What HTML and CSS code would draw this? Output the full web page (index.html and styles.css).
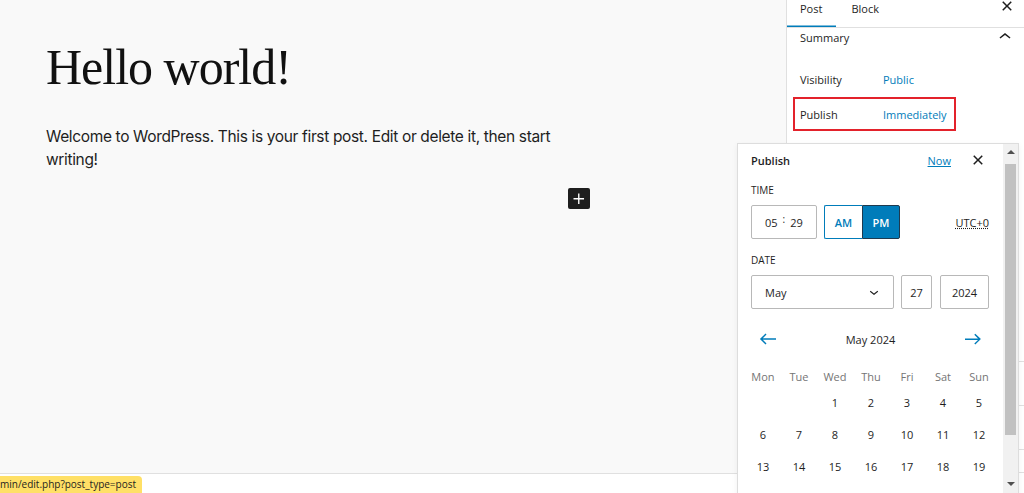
FILE: index.html
```html
<!DOCTYPE html>
<html lang="en">
  <head>
    <meta charset="UTF-8" />
    <meta name="viewport" content="width=device-width, initial-scale=1.0" />
    <title>Edit Post</title>
    <link rel="stylesheet" href="styles.css">
  </head>
  <body>
    <div class="layout">
      <main class="editor">
        <div class="canvas">
          <div class="content">
            <h1 class="post-title">Hello world!</h1>
            <p class="post-text">Welcome to WordPress. This is your first post. Edit or delete it, then start writing!</p>
            <div class="appender-row">
              <button class="appender" aria-label="Add block">
                <svg viewBox="0 0 24 24" width="24" height="24"><path d="M11 12.5V17.5H12.5V12.5H17.5V11H12.5V6H11V11H6V12.5H11Z" fill="#fff"/></svg>
              </button>
            </div>
          </div>
        </div>
        <div class="footer"></div>
      </main>

      <aside class="sidebar">
        <div class="tabs">
          <button class="tab active">Post</button>
          <button class="tab">Block</button>
          <button class="icon-btn tab-close" aria-label="Close settings">
            <svg viewBox="0 0 24 24" width="24" height="24"><path d="M12 13.06l3.712 3.713 1.061-1.06L13.061 12l3.712-3.712-1.06-1.06L12 10.938 8.288 7.227l-1.061 1.06L10.939 12l-3.712 3.712 1.06 1.061L12 13.061z"/></svg>
          </button>
        </div>

        <section class="panel summary">
          <div class="panel-head">
            <span>Summary</span>
            <svg viewBox="0 0 24 24" width="24" height="24"><path d="M6.5 12.4L12 8l5.5 4.4-.9 1.2L12 10l-4.6 3.6-.9-1.2z"/></svg>
          </div>
          <div class="row first">
            <span class="row-label">Visibility</span>
            <a class="row-value" href="#">Public</a>
          </div>
          <div class="row highlight">
            <span class="row-label">Publish</span>
            <a class="row-value" href="#">Immediately</a>
          </div>
        </section>
        <section class="panel small"></section>
        <section class="panel small"></section>
        <section class="panel tiny"></section>
      </aside>
    </div>

    <div class="popover">
      <div class="popover-body">
        <div class="popover-head">
          <span class="popover-title">Publish</span>
          <a class="now" href="#">Now</a>
          <button class="icon-btn" aria-label="Close">
            <svg viewBox="0 0 24 24" width="24" height="24"><path d="M12 13.06l3.712 3.713 1.061-1.06L13.061 12l3.712-3.712-1.06-1.06L12 10.938 8.288 7.227l-1.061 1.06L10.939 12l-3.712 3.712 1.06 1.061L12 13.061z"/></svg>
          </button>
        </div>

        <div class="field-label">Time</div>
        <div class="time-row">
          <div class="box time-box">
            <span>05</span>
            <span class="colon">:</span>
            <span>29</span>
          </div>
          <div class="ampm">
            <button class="am">AM</button>
            <button class="pm">PM</button>
          </div>
          <span class="utc">UTC+0</span>
        </div>

        <div class="field-label date-label">Date</div>
        <div class="date-row">
          <div class="box month">
            <span>May</span>
            <svg viewBox="0 0 24 24" width="18" height="18"><path d="M17.5 11.6L12 16l-5.5-4.4.9-1.2L12 14l4.6-3.6 1 1.2z"/></svg>
          </div>
          <div class="box day">27</div>
          <div class="box year">2024</div>
        </div>

        <div class="cal-head">
          <button class="icon-btn arrow" aria-label="Previous month">
            <svg viewBox="0 0 24 24" width="24" height="24"><path d="M20 11.2H6.8l3.7-3.7-1-1L3.9 12l5.6 5.5 1-1-3.7-3.7H20z"/></svg>
          </button>
          <span class="cal-title">May 2024</span>
          <button class="icon-btn arrow" aria-label="Next month">
            <svg viewBox="0 0 24 24" width="24" height="24"><path d="m14.3 6.7-1 1 3.7 3.7H4v1.5h13l-3.7 3.7 1 1 5.6-5.5z"/></svg>
          </button>
        </div>

        <div class="cal-grid weekdays">
          <span>Mon</span><span>Tue</span><span>Wed</span><span>Thu</span><span>Fri</span><span>Sat</span><span>Sun</span>
        </div>
        <div class="cal-grid days">
          <span></span><span></span><span>1</span><span>2</span><span>3</span><span>4</span><span>5</span>
          <span>6</span><span>7</span><span>8</span><span>9</span><span>10</span><span>11</span><span>12</span>
          <span>13</span><span>14</span><span>15</span><span>16</span><span>17</span><span>18</span><span>19</span>
        </div>
      </div>

      <div class="scrollbar">
        <span class="scroll-up"></span>
        <span class="scroll-thumb"></span>
        <span class="scroll-down"></span>
      </div>
    </div>

    <div class="status">min/edit.php?post_type=post</div>
  </body>
</html>
```

FILE: styles.css
```css
:root {
  --text: #1e1e1e;
  --muted: #757575;
  --border: #e0e0e0;
  --input-border: #b8b8b8;
  --accent: #007cba;
  --canvas: #f9f9f9;
  --ui-font: "Open Sans", "Noto Sans", sans-serif;
}

* {
  box-sizing: border-box;
}

body {
  margin: 0;
  height: 493px;
  overflow: hidden;
  color: var(--text);
  font-family: var(--ui-font);
  font-size: 11px;
  background: #fff;
}

button {
  font-family: inherit;
  font-size: inherit;
  color: inherit;
  background: none;
  border: none;
  padding: 0;
  cursor: pointer;
}

a {
  color: var(--accent);
  text-decoration: none;
}

.layout {
  display: flex;
  height: 493px;
}

/* editor */

.editor {
  width: 786px;
  display: flex;
  flex-direction: column;
}

.canvas {
  height: 473px;
  background: var(--canvas);
  padding: 37px 0 0 46px;
}

.content {
  width: 544px;
}

.post-title {
  margin: 0;
  font-family: "Liberation Serif", serif;
  font-weight: normal;
  font-size: 50px;
  line-height: 60px;
  letter-spacing: -1px;
  color: #111;
}

.post-text {
  margin: 28px 0 0;
  font-family: Inter, sans-serif;
  font-size: 15.5px;
  line-height: 23px;
  letter-spacing: -0.35px;
  color: #1e1e1e;
}

.appender-row {
  display: flex;
  justify-content: flex-end;
  margin-top: 17px;
}

.appender {
  width: 22px;
  height: 21px;
  background: #1e1e1e;
  border-radius: 2px;
  display: flex;
  align-items: center;
  justify-content: center;
  overflow: hidden;
}

.footer {
  flex: 1;
  border-top: 1px solid var(--border);
  background: #fff;
}

/* sidebar */

.sidebar {
  width: 238px;
  border-left: 1px solid var(--border);
  background: #fff;
}

.tabs {
  display: flex;
  align-items: flex-start;
  gap: 2px;
  height: 28px;
  border-bottom: 1px solid var(--border);
}

.tab {
  height: 27px;
  padding: 0 14px 9px 13px;
  line-height: 18px;
  font-weight: 500;
}

.tab.active {
  box-shadow: inset 0 -1.5px 0 var(--accent);
}

.icon-btn {
  display: flex;
  align-items: center;
  justify-content: center;
  width: 24px;
  height: 24px;
}

.icon-btn svg {
  fill: var(--text);
}

.tab-close {
  margin: -6px 5px 0 auto;
}

.panel {
  border-bottom: 1px solid var(--border);
  padding: 0 13px;
}

.summary {
  height: 334px;
}

.panel.small {
  height: 44px;
}

.panel.tiny {
  height: 23px;
}

.panel-head {
  display: flex;
  align-items: center;
  justify-content: space-between;
  height: 18px;
  font-weight: 500;
}

.panel-head svg {
  fill: var(--text);
  margin-right: -6px;
}

.row {
  display: flex;
  align-items: center;
  height: 35px;
}

.row.first {
  margin-top: 16px;
}

.row-label {
  width: 83px;
  flex-shrink: 0;
}

.row.highlight {
  width: 163px;
  height: 34px;
  margin-left: -7px;
  padding-left: 5px;
  border: 2px solid #e3222b;
}

/* publish popover */

.popover {
  position: absolute;
  top: 143px;
  left: 737px;
  width: 282px;
  height: 352px;
  display: flex;
  background: #fff;
  border: 1px solid #ddd;
  box-shadow: 0 2px 6px rgba(0, 0, 0, 0.06);
}

.popover-body {
  flex: 1;
  padding: 0 14px 0 13px;
  overflow: hidden;
}

.popover-head {
  display: flex;
  align-items: center;
  height: 32px;
}

.popover-title {
  font-weight: 600;
}

.now {
  margin-left: auto;
  margin-right: 15px;
  text-decoration: underline;
}

.popover-head .icon-btn {
  margin-right: -1px;
}

.field-label {
  margin-top: 6px;
  font-size: 10px;
  line-height: 16px;
  font-weight: 500;
  text-transform: uppercase;
}

.date-label {
  margin-top: 13px;
}

.time-row,
.date-row {
  display: flex;
  align-items: center;
  margin-top: 7px;
  height: 34px;
}

.box {
  height: 34px;
  border: 1px solid var(--input-border);
  border-radius: 2px;
  display: flex;
  align-items: center;
}

.time-box {
  width: 66px;
  padding-left: 13px;
  gap: 5px;
}

.colon {
  position: relative;
  top: -3px;
  font-size: 10px;
}

.ampm {
  display: flex;
  margin-left: 7px;
  height: 34px;
}

.ampm button {
  width: 38px;
  font-weight: 600;
}

.am {
  color: var(--accent);
  border: 1px solid var(--accent);
  border-right: none;
  border-radius: 2px 0 0 2px;
}

.pm {
  color: #fff;
  background: var(--accent);
  border: 1px solid #1e3a4f;
  border-radius: 0 2px 2px 0;
}

.utc {
  margin-left: auto;
  text-decoration: underline dotted;
}

.month {
  width: 143px;
  padding: 0 10px 0 13px;
  justify-content: space-between;
}

.month svg {
  fill: var(--text);
}

.day {
  width: 31px;
  margin-left: 7px;
  justify-content: center;
}

.year {
  width: 49px;
  margin-left: 8px;
  justify-content: center;
}

.cal-head {
  display: flex;
  align-items: center;
  justify-content: space-between;
  margin-top: 18px;
  height: 24px;
  padding: 0 4px 0 5px;
}

.arrow svg {
  fill: var(--accent);
}

.cal-title {
  font-weight: 500;
}

.cal-grid {
  display: grid;
  grid-template-columns: repeat(7, 36px);
  width: 252px;
  margin-left: -6px;
  text-align: center;
}

.weekdays {
  margin-top: 17px;
  line-height: 18px;
  color: var(--muted);
}

.days {
  margin-top: 1px;
  grid-auto-rows: 32px;
  line-height: 32px;
}

/* fake scrollbar */

.scrollbar {
  width: 15px;
  background: #f1f1f1;
  display: flex;
  flex-direction: column;
  align-items: center;
}

.scroll-up,
.scroll-down {
  width: 0;
  height: 0;
  border-left: 4px solid transparent;
  border-right: 4px solid transparent;
}

.scroll-up {
  margin-top: 6px;
  border-bottom: 4px solid #505050;
}

.scroll-thumb {
  width: 11px;
  height: 271px;
  margin-top: 10px;
  background: #c1c1c1;
}

.scroll-down {
  margin-top: auto;
  margin-bottom: 8px;
  border-top: 4px solid #505050;
}

/* browser status bubble */

.status {
  position: absolute;
  left: 0;
  bottom: 0;
  height: 17px;
  padding: 0 6px 0 0;
  font-size: 10px;
  line-height: 17px;
  background: #ffe066;
  border-top-right-radius: 4px;
  color: #1e1e1e;
}
```
